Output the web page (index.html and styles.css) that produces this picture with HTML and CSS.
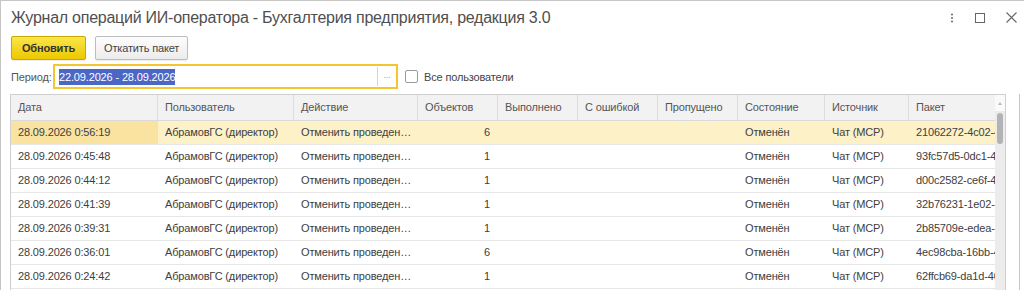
FILE: index.html
```html
<!DOCTYPE html>
<html lang="ru">
<head>
<meta charset="UTF-8">
<title>Журнал операций ИИ-оператора</title>
<link rel="stylesheet" href="styles.css">
</head>
<body>

<div class="window">

<!-- Title -->
<div class="titlebar">
    <span class="title">Журнал операций ИИ-оператора - Бухгалтерия предприятия, редакция 3.0</span>
    <div class="win-actions">
        <svg width="4" height="10" viewBox="0 0 4 10"><circle cx="2" cy="1.5" r="1.1" fill="#777"/><circle cx="2" cy="5" r="1.1" fill="#777"/><circle cx="2" cy="8.5" r="1.1" fill="#777"/></svg>
        <svg width="10" height="10" viewBox="0 0 10 10"><rect x="0.5" y="0.5" width="9" height="9" fill="none" stroke="#666" stroke-width="1"/></svg>
        <svg width="11" height="11" viewBox="0 0 11 11"><path d="M0.5 0.5 L10.5 10.5 M10.5 0.5 L0.5 10.5" stroke="#666" stroke-width="1.1"/></svg>
    </div>
</div>

<!-- Command bar -->
<div class="toolbar">
    <button class="btn btn-main">Обновить</button>
    <button class="btn">Откатить пакет</button>
</div>

<!-- Filter -->
<div class="filter">
    <span class="lbl">Период:</span>
    <div class="period">
        <span class="value"><span class="sel">22.09.2026 - 28.09.2026</span></span>
        <span class="choose">...</span>
    </div>
    <label class="check"><span class="box"></span>Все пользователи</label>
</div>

<!-- Grid -->
<div class="body">
<div class="grid-wrap">
    <div class="grid">
        <div class="row head">
            <div class="cell">Дата</div>
            <div class="cell">Пользователь</div>
            <div class="cell">Действие</div>
            <div class="cell">Объектов</div>
            <div class="cell">Выполнено</div>
            <div class="cell">С ошибкой</div>
            <div class="cell">Пропущено</div>
            <div class="cell">Состояние</div>
            <div class="cell">Источник</div>
            <div class="cell">Пакет</div>
        </div>
        <div class="row current">
            <div class="cell">28.09.2026 0:56:19</div>
            <div class="cell">АбрамовГС (директор)</div>
            <div class="cell">Отменить проведение документов</div>
            <div class="cell num">6</div>
            <div class="cell"></div>
            <div class="cell"></div>
            <div class="cell"></div>
            <div class="cell">Отменён</div>
            <div class="cell">Чат (MCP)</div>
            <div class="cell clip">21062272-4c02-4a7e-9b1d-3f5e2a8c0d11</div>
        </div>
        <div class="row">
            <div class="cell">28.09.2026 0:45:48</div>
            <div class="cell">АбрамовГС (директор)</div>
            <div class="cell">Отменить проведение документов</div>
            <div class="cell num">1</div>
            <div class="cell"></div>
            <div class="cell"></div>
            <div class="cell"></div>
            <div class="cell">Отменён</div>
            <div class="cell">Чат (MCP)</div>
            <div class="cell clip">93fc57d5-0dc1-4b62-8e0a-7c1d9f4e2b30</div>
        </div>
        <div class="row">
            <div class="cell">28.09.2026 0:44:12</div>
            <div class="cell">АбрамовГС (директор)</div>
            <div class="cell">Отменить проведение документов</div>
            <div class="cell num">1</div>
            <div class="cell"></div>
            <div class="cell"></div>
            <div class="cell"></div>
            <div class="cell">Отменён</div>
            <div class="cell">Чат (MCP)</div>
            <div class="cell clip">d00c2582-ce6f-4d1a-a3b7-5e90c2f18a44</div>
        </div>
        <div class="row">
            <div class="cell">28.09.2026 0:41:39</div>
            <div class="cell">АбрамовГС (директор)</div>
            <div class="cell">Отменить проведение документов</div>
            <div class="cell num">1</div>
            <div class="cell"></div>
            <div class="cell"></div>
            <div class="cell"></div>
            <div class="cell">Отменён</div>
            <div class="cell">Чат (MCP)</div>
            <div class="cell clip">32b76231-1e02-4f8c-b2d6-0a4e7c91d5f2</div>
        </div>
        <div class="row">
            <div class="cell">28.09.2026 0:39:31</div>
            <div class="cell">АбрамовГС (директор)</div>
            <div class="cell">Отменить проведение документов</div>
            <div class="cell num">1</div>
            <div class="cell"></div>
            <div class="cell"></div>
            <div class="cell"></div>
            <div class="cell">Отменён</div>
            <div class="cell">Чат (MCP)</div>
            <div class="cell clip">2b85709e-edea-4c3b-91f7-6d2a8e0b4c57</div>
        </div>
        <div class="row">
            <div class="cell">28.09.2026 0:36:01</div>
            <div class="cell">АбрамовГС (директор)</div>
            <div class="cell">Отменить проведение документов</div>
            <div class="cell num">6</div>
            <div class="cell"></div>
            <div class="cell"></div>
            <div class="cell"></div>
            <div class="cell">Отменён</div>
            <div class="cell">Чат (MCP)</div>
            <div class="cell clip">4ec98cba-16bb-4e05-a8d3-b17f2c6e9a08</div>
        </div>
        <div class="row">
            <div class="cell">28.09.2026 0:24:42</div>
            <div class="cell">АбрамовГС (директор)</div>
            <div class="cell">Отменить проведение документов</div>
            <div class="cell num">1</div>
            <div class="cell"></div>
            <div class="cell"></div>
            <div class="cell"></div>
            <div class="cell">Отменён</div>
            <div class="cell">Чат (MCP)</div>
            <div class="cell clip">62ffcb69-da1d-40e2-9c7a-4b8d1f3e5a26</div>
        </div>
        <div class="row">
            <div class="cell">28.09.2026 0:18:05</div>
            <div class="cell">АбрамовГС (директор)</div>
            <div class="cell">Отменить проведение документов</div>
            <div class="cell num">1</div>
            <div class="cell"></div>
            <div class="cell"></div>
            <div class="cell"></div>
            <div class="cell">Отменён</div>
            <div class="cell">Чат (MCP)</div>
            <div class="cell clip">7a1e0c93-52bf-4d8e-b6a1-c09e3d7f2b14</div>
        </div>
    </div>
    <div class="scrollbar">
        <div class="arrow"></div>
        <div class="track"><div class="thumb"></div></div>
    </div>
</div>
</div>

</div>

</body>
</html>
```

FILE: styles.css
```css
html, body {
    height: 290px;
    overflow: hidden;
}

body {
    margin: 0;
    font-family: "Liberation Sans", Arial, sans-serif;
    font-size: 11px;
    letter-spacing: -0.15px;
    color: #404040;
    background: #fff;
}

.window {
    height: 289px;
    border-top: 1px solid #c6c6c6;
    border-left: 1px solid #c6c6c6;
    display: flex;
    flex-direction: column;
}

/* Title bar */
.titlebar {
    height: 35px;
    display: flex;
    align-items: center;
    padding: 0 7px 0 10px;
}

.title {
    font-size: 16px;
    letter-spacing: -0.25px;
    color: #4f4f4f;
    flex: 1;
    margin-top: -2px;
}

.win-actions {
    display: flex;
    align-items: center;
    gap: 21px;
    margin-top: -2px;
}

/* Buttons */
.toolbar {
    display: flex;
    gap: 9px;
    padding-left: 10px;
    height: 24px;
}

.btn {
    height: 24px;
    padding: 0 8px;
    font-family: "Liberation Sans", Arial, sans-serif;
    font-size: 11px;
    letter-spacing: -0.15px;
    color: #444;
    background: linear-gradient(#fdfdfd, #ececec);
    border: 1px solid #bdbdbd;
    border-radius: 2px;
    box-shadow: 0 1px 1px rgba(0,0,0,0.08);
}

.btn-main {
    width: 75px;
    font-weight: bold;
    color: #333;
    background: linear-gradient(#fbe64a, #ecc800);
    border-color: #c9a800;
}

/* Period filter */
.filter {
    display: flex;
    align-items: center;
    margin-top: 4px;
    padding-left: 10px;
    height: 25px;
}

.lbl {
    color: #555;
    width: 42px;
}

.period {
    width: 341px;
    height: 21px;
    border: 2px solid #f3c531;
    display: flex;
    align-items: center;
}

.period .value {
    flex: 1;
    padding-left: 4px;
}

.sel {
    background: #4c66c6;
    color: #fff;
    padding: 2px 0;
}

.choose {
    width: 18px;
    height: 19px;
    border-left: 1px solid #d6d6d6;
    color: #999;
    font-size: 9px;
    text-align: center;
    line-height: 17px;
}

.check {
    display: flex;
    align-items: center;
    margin-left: 7px;
    color: #444;
}

.box {
    width: 11px;
    height: 11px;
    border: 1px solid #9a9a9a;
    border-radius: 2px;
    margin-right: 6px;
}

/* Grid */
.body {
    flex: 1;
    display: flex;
    margin-top: 5px;
    padding: 0 13px 0 9px;
    border-right: 1px solid #c6c6c6;
    margin-right: 4px;
    min-height: 0;
}

.grid-wrap {
    flex: 1;
    border: 1px solid #cfcfcf;
    border-bottom: none;
    display: flex;
    overflow: hidden;
}

.grid {
    flex: 1;
    overflow: hidden;
}

.row {
    display: grid;
    grid-template-columns: 147px 136px 124px 80px 80px 80px 80px 87px 84px 1fr;
    height: 24px;
    border-bottom: 1px solid #e6e6e6;
    box-sizing: border-box;
}

.row.head {
    height: 26px;
    background: #f2f2f2;
    border-bottom: 1px solid #dadada;
    color: #555;
}

.cell {
    padding: 0 5px 0 7px;
    line-height: 23px;
    white-space: nowrap;
    overflow: hidden;
    text-overflow: ellipsis;
}

.head .cell {
    line-height: 25px;
    border-right: 1px solid #dcdcdc;
}

.head .cell:last-child { border-right: none; }

.cell.num { text-align: right; padding-right: 8px; }
.cell.clip { text-overflow: clip; padding-right: 0; }

.row.current { background: #fdf1c8; }
.row.current .cell:first-child { background: #fae2a0; }

/* Scrollbar */
.scrollbar {
    width: 10px;
    display: flex;
    flex-direction: column;
    background: #fafafa;
}

.arrow {
    height: 16px;
    position: relative;
}

.arrow::after {
    content: "";
    position: absolute;
    left: 3px;
    top: 7px;
    border-left: 2px solid transparent;
    border-right: 2px solid transparent;
    border-bottom: 3px solid #bbb;
}

.track {
    flex: 1;
    background: #ececec;
    padding-top: 2px;
}

.thumb {
    width: 6px;
    height: 31px;
    margin-left: 2px;
    background: #b3b3b3;
    border-radius: 3px;
}
```
